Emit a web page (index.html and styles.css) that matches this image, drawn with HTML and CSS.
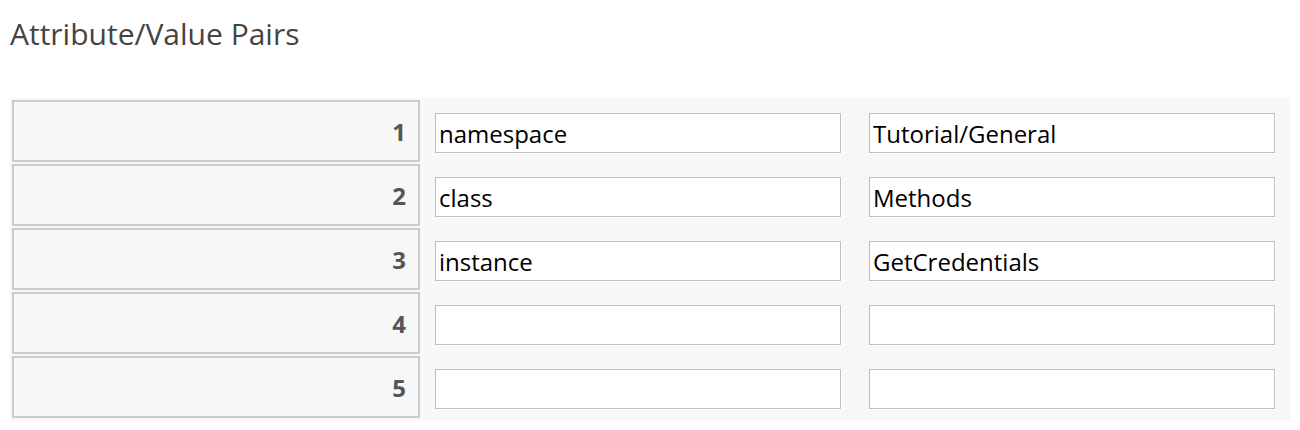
FILE: index.html
```html
<!DOCTYPE html>
<html>
<head>
<meta charset="utf-8">
<link rel="stylesheet" href="styles.css">
</head>
<body>
<div class="page">
  <h2 class="title">Attribute/Value Pairs</h2>
  <table class="pairs">
    <tr>
      <th class="idx">1</th>
      <td class="cell"><input class="field" type="text" value="namespace"></td>
      <td class="cell"><input class="field" type="text" value="Tutorial/General"></td>
    </tr>
    <tr>
      <th class="idx">2</th>
      <td class="cell"><input class="field" type="text" value="class"></td>
      <td class="cell"><input class="field" type="text" value="Methods"></td>
    </tr>
    <tr>
      <th class="idx">3</th>
      <td class="cell"><input class="field" type="text" value="instance"></td>
      <td class="cell"><input class="field" type="text" value="GetCredentials"></td>
    </tr>
    <tr>
      <th class="idx">4</th>
      <td class="cell"><input class="field" type="text" value=""></td>
      <td class="cell"><input class="field" type="text" value=""></td>
    </tr>
    <tr>
      <th class="idx">5</th>
      <td class="cell"><input class="field" type="text" value=""></td>
      <td class="cell"><input class="field" type="text" value=""></td>
    </tr>
  </table>
</div>
</body>
</html>
```

FILE: styles.css
```css
html, body {
  margin: 0;
  padding: 0;
  background: #ffffff;
}

.page {
  padding: 0 10px;
  font-family: "Open Sans", "Noto Sans", sans-serif;
}

.title {
  margin: 0;
  padding-top: 13px;
  height: 98px;
  box-sizing: border-box;
  font-size: 30px;
  line-height: 42px;
  font-weight: 400;
  color: #444444;
}

.pairs {
  width: 1280px;
  border-collapse: separate;
  border-spacing: 2px;
  background: #f7f7f7;
  table-layout: fixed;
}

.idx {
  width: 392px;
  height: 58px;
  padding: 0 12px 0 0;
  border: 2px solid #cccccc;
  background: #f7f7f7;
  text-align: right;
  vertical-align: middle;
  font-family: "Open Sans", "Noto Sans", sans-serif;
  font-size: 24px;
  font-weight: 700;
  color: #555555;
}

.cell {
  width: 406px;
  padding: 13px 13px 9px 13px;
  vertical-align: top;
}

.field {
  display: block;
  box-sizing: border-box;
  width: 406px;
  height: 40px;
  margin: 0;
  padding: 0 3px;
  border: 1px solid #bdbdbd;
  box-shadow: 1px 1px 0 #ffffff;
  background: #ffffff;
  font-family: "Open Sans", "Noto Sans", sans-serif;
  font-size: 24px;
  color: #000000;
  outline: none;
}
```
